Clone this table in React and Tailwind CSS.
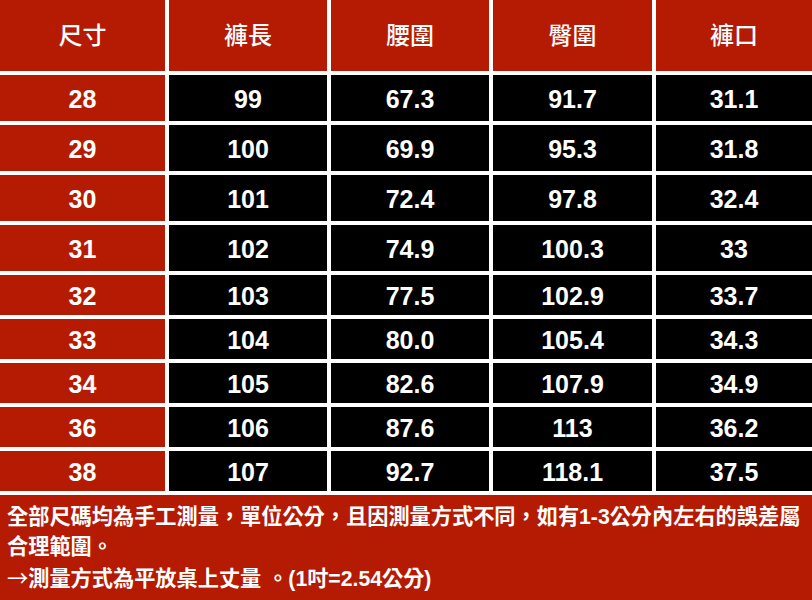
const headers = ["尺寸", "褲長", "腰圍", "臀圍", "褲口"];
const rows = [
  ["28", "99", "67.3", "91.7", "31.1"],
  ["29", "100", "69.9", "95.3", "31.8"],
  ["30", "101", "72.4", "97.8", "32.4"],
  ["31", "102", "74.9", "100.3", "33"],
  ["32", "103", "77.5", "102.9", "33.7"],
  ["33", "104", "80.0", "105.4", "34.3"],
  ["34", "105", "82.6", "107.9", "34.9"],
  ["36", "106", "87.6", "113", "36.2"],
  ["38", "107", "92.7", "118.1", "37.5"],
];

export default function App() {
  return (
    <div className="w-[812px] h-[600px] bg-white flex flex-col gap-[4px] overflow-hidden" style={{ fontFamily: '"Liberation Sans", "Noto Sans CJK TC", sans-serif' }}>
      <div className="grid grid-cols-[165px_158px_158px_159px_1fr] gap-[4px]">
        {headers.map((h) => (
          <div key={h} className="h-[71px] pb-[3px] bg-[#b51b02] text-white flex items-center justify-center text-[24px] font-medium" style={{ fontFamily: '"Noto Sans CJK TC", sans-serif' }}>
            {h}
          </div>
        ))}
        {rows.map((r, i) =>
          r.map((c, j) => (
            <div
              key={i + "-" + j}
              className={
                (i < 4 ? "h-[46px] " : "h-[40px] ") +
                (j === 0 ? "bg-[#b51b02] " : "bg-black ") +
                "pt-[4px] text-white flex items-center justify-center text-[25px] font-bold"
              }
            >
              {c}
            </div>
          ))
        )}
      </div>
      <div className="flex-1 bg-[#b51b02] text-white font-bold text-[21.2px] leading-[30px] pl-[7px] pt-[7px]">
        <div>全部尺碼均為手工測量，單位公分，且因測量方式不同，如有1-3公分內左右的誤差屬</div>
        <div>合理範圍。</div>
        <div>
          <span className="font-normal" style={{ fontFamily: '"Noto Sans CJK TC", sans-serif' }}>→</span>測量方式為平放桌上丈量 。(1吋=2.54公分)
        </div>
      </div>
    </div>
  );
}
